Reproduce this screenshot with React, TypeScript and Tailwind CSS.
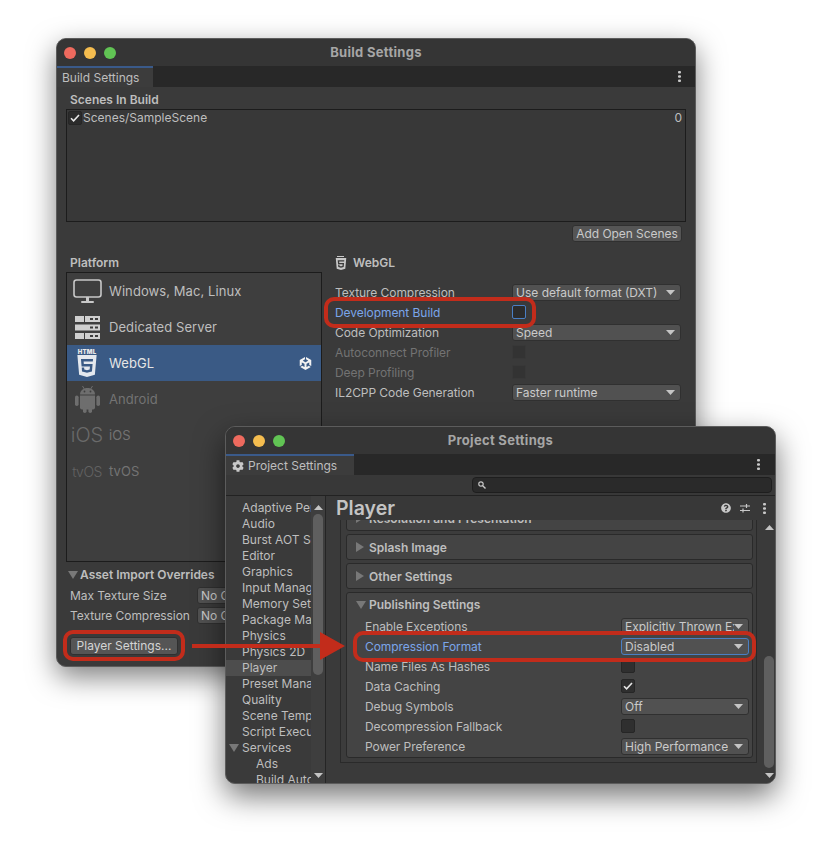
import React from "react";
import { FaCog, FaQuestionCircle } from "react-icons/fa";
import { SiHtml5, SiUnity } from "react-icons/si";

const Caret = ({ className = "" }: { className?: string }) => (
  <svg width="9" height="5" viewBox="0 0 9 5" className={className}>
    <path d="M0 0h9L4.5 5z" fill="#c4c4c4" />
  </svg>
);

const FoldDown = () => (
  <svg width="10" height="8" viewBox="0 0 10 8" className="shrink-0">
    <path d="M0 0h10L5 8z" fill="#787878" />
  </svg>
);

const Dots = () => (
  <svg width="3" height="11" viewBox="0 0 3 11">
    <rect x="0" y="0" width="3" height="2.4" rx="1" fill="#c8c8c8" />
    <rect x="0" y="4.3" width="3" height="2.4" rx="1" fill="#c8c8c8" />
    <rect x="0" y="8.6" width="3" height="2.4" rx="1" fill="#c8c8c8" />
  </svg>
);

const Check = () => (
  <svg width="10" height="8" viewBox="0 0 10 8">
    <path d="M1 4.2 3.6 6.8 9 1" fill="none" stroke="#e6e6e6" strokeWidth="1.6" />
  </svg>
);

const TrafficLights = () => (
  <div className="flex gap-2">
    <div className="w-3 h-3 rounded-full bg-[#ee6a5e]" />
    <div className="w-3 h-3 rounded-full bg-[#f5bd4f]" />
    <div className="w-3 h-3 rounded-full bg-[#61c454]" />
  </div>
);

const Dropdown = ({ label, className = "", active = false }: { label: string; className?: string; active?: boolean }) => (
  <div
    className={`h-[17px] flex items-center justify-between pl-[3px] pr-[5px] rounded-[3px] bg-[#515151] border overflow-hidden ${
      active ? "border-[#4a7fc4]" : "border-[#303030]"
    } ${className}`}
  >
    <span className="pt-px text-[12px] leading-[14px] text-[#cacaca] whitespace-nowrap overflow-hidden">{label}</span>
    <Caret className="shrink-0" />
  </div>
);

const CheckBox = ({ checked = false, active = false, dim = false }: { checked?: boolean; active?: boolean; dim?: boolean }) => (
  <div
    className={`w-[14px] h-[14px] flex items-center justify-center rounded-[2px] border ${
      active ? "border-[#4a7fc4] bg-[#2c2c2c]" : dim ? "border-[#383838] bg-[#333333]" : "border-[#262626] bg-[#2f2f2f]"
    }`}
  >
    {checked && <Check />}
  </div>
);

const Html5Icon = ({ small = false }: { small?: boolean }) =>
  small ? (
    <div className="flex flex-col items-center w-[11px]">
      <div className="w-[7px] h-px bg-[#c8c8c8] mb-px" />
      <SiHtml5 size={12} color="#c8c8c8" />
    </div>
  ) : (
    <div className="flex flex-col items-center">
      <span className="text-[6px] leading-[6px] font-black tracking-[0.2px] text-[#e8e8e8]">HTML</span>
      <SiHtml5 size={22} color="#e4e8ee" />
    </div>
  );

const AndroidIcon = () => (
  <svg width="25" height="28" viewBox="0 0 25 28">
    <g fill="#6e6e6e">
      <path d="M5 9.500C5 5.500 8.500 3 12.500 3S20 5.500 20 9.500z" />
      <path d="M7.500 1l1.800 3M17.500 1l-1.800 3" stroke="#6e6e6e" strokeWidth="1" />
      <path d="M5 10.500h15v12a2 2 0 0 1-2 2H7a2 2 0 0 1-2-2z" />
      <rect x="0" y="10.500" width="3.600" height="10.500" rx="1.800" />
      <rect x="21.400" y="10.500" width="3.600" height="10.500" rx="1.800" />
      <rect x="8" y="22" width="3.600" height="6" rx="1.800" />
      <rect x="13.400" y="22" width="3.600" height="6" rx="1.800" />
    </g>
    <circle cx="9.500" cy="6.500" r="0.900" fill="#3e3e3e" />
    <circle cx="15.500" cy="6.500" r="0.900" fill="#3e3e3e" />
  </svg>
);

const platforms: { name: string; icon: React.ReactNode; selected?: boolean; dim?: boolean }[] = [
  {
    name: "Windows, Mac, Linux",
    icon: (
      <svg width="29" height="25" viewBox="0 0 29 25">
        <rect x="1" y="1" width="27" height="17" rx="2.5" fill="none" stroke="#c8c8c8" strokeWidth="1.6" />
        <rect x="13" y="18" width="3" height="4" fill="#c8c8c8" />
        <rect x="8" y="22" width="13" height="2" rx="1" fill="#c8c8c8" />
      </svg>
    ),
  },
  {
    name: "Dedicated Server",
    icon: (
      <svg width="25" height="23" viewBox="0 0 25 23">
        <path d="M0 0h25v6H0zM0 8.500h25v6H0zM0 17h25v6H0z" fill="#cfcfcf" />
        <path d="M15 2h3v2h-3zM20 2h3v2h-3zM15 10.500h3v2h-3zM20 10.500h3v2h-3zM15 19h3v2h-3zM20 19h3v2h-3zM9 0h1v6H9zM9 17h1v6H9z" fill="#3c3c3c" />
      </svg>
    ),
  },
  { name: "WebGL", icon: <Html5Icon />, selected: true },
  { name: "Android", icon: <AndroidIcon />, dim: true },
  { name: "iOS", icon: <span className="text-[20px] font-light text-[#6a6a6a]">iOS</span>, dim: true },
  { name: "tvOS", icon: <span className="text-[14px] font-light tracking-[-0.5px] text-[#626262]">tvOS</span>, dim: true },
];

const PlatformRow = ({ name, icon, selected, dim }: (typeof platforms)[number]) => (
  <div className={`h-9 flex items-center ${selected ? "bg-[#3a5a85]" : ""}`}>
    <div className="w-[38px] flex justify-center shrink-0 ml-px">{icon}</div>
    <span className={`ml-[3px] pt-[2px] text-[13px] tracking-[0.08px] ${selected ? "text-[#e6e6e6]" : dim ? "text-[#737373]" : "text-[#bebebe]"}`}>
      {name}
    </span>
    {selected && <SiUnity size={13} color="#f2f2f2" className="ml-auto mr-[9px]" />}
  </div>
);

const BuildRow = ({ label, tone, children }: { label: string; tone?: string; children?: React.ReactNode }) => (
  <div className="h-5 flex items-center">
    <span className={`w-[177px] shrink-0 pt-[2px] text-[12px] tracking-[-0.06px] whitespace-nowrap ${tone ?? "text-[#bebebe]"}`}>{label}</span>
    {children}
  </div>
);

const BuildWindow = () => (
  <div className="absolute left-[56px] top-[38px] w-[640px] h-[629px] flex flex-col overflow-hidden rounded-[10px] border border-[#5c5c5c] bg-[#3a3a3a] shadow-[0_10px_28px_rgba(0,0,0,0.5)]">
    <div className="relative h-[27px] shrink-0 flex items-center pl-[7px] bg-[#353535]">
      <TrafficLights />
      <span className="absolute inset-x-0 text-center text-[13px] tracking-[0.3px] font-bold text-[#a6a6a6]">Build Settings</span>
    </div>
    <div className="h-[21px] shrink-0 flex items-stretch justify-between bg-[#282828]">
      <div className="w-[96px] flex items-center pl-[5px] pt-px bg-[#3c3c3c] border-t-2 border-[#3a5a8a] text-[12px] text-[#bebebe]">Build Settings</div>
      <div className="flex items-center pr-[14px]">
        <Dots />
      </div>
    </div>

    <div className="flex-1 flex flex-col pt-[5px] pl-[9px]">
      <div className="h-4 pl-1 text-[12px] leading-4 font-semibold text-[#bebebe]">Scenes In Build</div>
      <div className="mt-px w-[620px] h-[113px] flex items-start justify-between pt-[1px] pl-[1px] pr-[3px] border border-[#1c1c1c] bg-[#383838]">
        <div className="flex items-center gap-[1px]">
          <div className="w-[14px] h-[14px] flex items-center justify-center rounded-[2px] border border-[#262626] bg-[#2b2b2b]">
            <Check />
          </div>
          <span className="text-[12px] leading-[14px] text-[#bebebe]">Scenes/SampleScene</span>
        </div>
        <span className="text-[12px] leading-[14px] text-[#bebebe]">0</span>
      </div>
      <div className="self-end mt-[3px] mr-[13px] w-[110px] h-[17px] flex items-center justify-center rounded-[3px] bg-[#555555] border border-[#303030] text-[12px] tracking-[-0.06px] text-[#cacaca]">
        Add Open Scenes
      </div>

      <div className="mt-[13px] flex">
        <div className="w-[256px] shrink-0">
          <div className="h-4 pl-1 text-[12px] leading-4 font-semibold text-[#bebebe]">Platform</div>
          <div className="mt-px h-[290px] border border-[#1c1c1c] bg-[#3e3e3e]">
            {platforms.map((p) => (
              <PlatformRow key={p.name} {...p} />
            ))}
          </div>
        </div>
        <div className="ml-[13px] w-[347px]">
          <div className="h-4 flex items-center gap-[7px] text-[12px] font-semibold text-[#bebebe]">
            <Html5Icon small />
            WebGL
          </div>
          <div className="mt-[11px]">
            <BuildRow label="Texture Compression">
              <Dropdown label="Use default format (DXT)" className="w-[169px]" />
            </BuildRow>
            <BuildRow label="Development Build" tone="text-[#7ba6ea]">
              <CheckBox active />
            </BuildRow>
            <BuildRow label="Code Optimization">
              <Dropdown label="Speed" className="w-[169px]" />
            </BuildRow>
            <BuildRow label="Autoconnect Profiler" tone="text-[#737373]">
              <CheckBox dim />
            </BuildRow>
            <BuildRow label="Deep Profiling" tone="text-[#737373]">
              <CheckBox dim />
            </BuildRow>
            <BuildRow label="IL2CPP Code Generation">
              <Dropdown label="Faster runtime" className="w-[169px]" />
            </BuildRow>
          </div>
        </div>
      </div>

      <div className="mt-[5px] h-4 flex items-center gap-[2px] pl-[2px]">
        <FoldDown />
        <span className="text-[12px] font-semibold text-[#bebebe]">Asset Import Overrides</span>
      </div>
      <div className="mt-[2px]">
        {["Max Texture Size", "Texture Compression"].map((label) => (
          <div key={label} className="h-5 flex items-center pl-[4px]">
            <span className="w-[127px] shrink-0 pt-[2px] text-[12px] tracking-[-0.06px] whitespace-nowrap text-[#bebebe]">{label}</span>
            <Dropdown label="No Override" className="w-[120px]" />
          </div>
        ))}
      </div>
      <div className="mt-[12px] ml-[4px] w-[108px] h-[18px] flex items-center justify-center rounded-[3px] bg-[#555555] border border-[#303030] text-[12px] text-[#d4d4d4]">
        Player Settings...
      </div>
    </div>
  </div>
);

const sidebar = [
  "Adaptive Performance",
  "Audio",
  "Burst AOT Settings",
  "Editor",
  "Graphics",
  "Input Manager",
  "Memory Settings",
  "Package Manager",
  "Physics",
  "Physics 2D",
  "Player",
  "Preset Manager",
  "Quality",
  "Scene Template",
  "Script Execution Order",
];

const FoldCard = ({ title, className = "" }: { title: string; className?: string }) => (
  <div className={`h-[26px] flex items-center gap-[5px] pl-[9px] rounded-[3px] border border-[#2a2a2a] bg-[#444444] ${className}`}>
    <svg width="8" height="10" viewBox="0 0 8 10">
      <path d="M0 0l8 5-8 5z" fill="#787878" />
    </svg>
    <span className="pt-px text-[12px] font-semibold text-[#bebebe] whitespace-nowrap">{title}</span>
  </div>
);

const PubRow = ({ label, tone, children }: { label: string; tone?: string; children: React.ReactNode }) => (
  <div className="h-5 flex items-center">
    <span className={`w-[256px] shrink-0 pt-[2px] text-[12px] tracking-[-0.08px] whitespace-nowrap ${tone ?? "text-[#bebebe]"}`}>{label}</span>
    {children}
  </div>
);

const ProjectWindow = () => (
  <div className="absolute left-[225px] top-[426px] w-[551px] h-[358px] flex flex-col overflow-hidden rounded-[10px] border border-[#5c5c5c] bg-[#3a3a3a] shadow-[0_12px_30px_rgba(0,0,0,0.55)]">
    <div className="relative h-[27px] shrink-0 flex items-center pl-[7px] bg-[#353535]">
      <TrafficLights />
      <span className="absolute inset-x-0 text-center text-[13px] tracking-[0.3px] font-bold text-[#a6a6a6]">Project Settings</span>
    </div>
    <div className="h-[21px] shrink-0 flex items-stretch justify-between bg-[#282828]">
      <div className="w-[128px] flex items-center gap-[4px] pl-[6px] pt-px bg-[#3c3c3c] border-t-2 border-[#3a5a8a] text-[12px] text-[#bebebe]">
        <FaCog size={12} color="#c8c8c8" />
        Project Settings
      </div>
      <div className="flex items-center pr-[15px]">
        <Dots />
      </div>
    </div>
    <div className="h-[21px] shrink-0 flex items-center justify-end pr-[3px] border-b border-[#222222] bg-[#383838]">
      <div className="w-[300px] h-[16px] flex items-center pl-[5px] rounded-[4px] border border-[#1e1e1e] bg-[#2a2a2a]">
        <svg width="8" height="8" viewBox="0 0 8 8">
          <circle cx="3" cy="3" r="2.2" fill="none" stroke="#c8c8c8" strokeWidth="1.2" />
          <path d="M4.700 4.700 7.500 7.500" stroke="#c8c8c8" strokeWidth="1.4" />
        </svg>
      </div>
    </div>

    <div className="flex-1 flex min-h-0">
      <div className="w-[100px] shrink-0 flex border-r border-[#252525]">
        <div className="w-[85px] shrink-0 pt-[4px] overflow-hidden">
          {sidebar.map((name) => (
            <div
              key={name}
              className={`h-4 pl-[16px] text-[12px] leading-4 whitespace-nowrap overflow-hidden text-[#bebebe] ${name === "Player" ? "bg-[#4d4d4d]" : ""}`}
            >
              {name}
            </div>
          ))}
          <div className="h-4 flex items-center pl-[3px] gap-[3px] text-[12px] text-[#bebebe]">
            <FoldDown />
            Services
          </div>
          <div className="h-4 pl-[30px] text-[12px] leading-4 text-[#bebebe]">Ads</div>
          <div className="h-4 pl-[30px] text-[12px] leading-4 whitespace-nowrap text-[#bebebe]">Build Automation</div>
        </div>
        <div className="flex-1 flex flex-col items-center bg-[#3e3e3e] pt-[9px] pb-[5px]">
          <Caret className="rotate-180" />
          <div className="mt-[4px] w-[10px] h-[161px] rounded-full bg-[#5f5f5f]" />
          <Caret className="mt-auto" />
        </div>
      </div>

      <div className="flex-1 flex flex-col min-w-0">
        <div className="relative z-10 h-[24px] shrink-0 flex items-center justify-between pl-[10px] pr-[9px] bg-[#383838]">
          <span className="pt-[2px] text-[19.5px] font-semibold text-[#c4c4c4]">Player</span>
          <div className="flex items-center gap-[9px]">
            <FaQuestionCircle size={10} color="#c8c8c8" />
            <svg width="10" height="10" viewBox="0 0 10 10">
              <path d="M0 3h10M0 7.500h10" stroke="#c8c8c8" strokeWidth="1" />
              <path d="M6.500 1v4M3 5.500v4" stroke="#c8c8c8" strokeWidth="1.2" />
            </svg>
            <div className="ml-[4px]">
              <Dots />
            </div>
          </div>
        </div>
        <div className="flex-1 flex min-h-0 overflow-hidden">
          <div className="w-[431px] shrink-0 pl-[14px]">
            <div className="-mt-[15px] h-[258px] pl-[5px] pr-[3px] border-x border-b border-[#2a2a2a] bg-[#3c3c3c]">
              <FoldCard title="Resolution and Presentation" />
              <FoldCard title="Splash Image" className="mt-[3px]" />
              <FoldCard title="Other Settings" className="mt-[3px]" />
              <div className="mt-[3px] h-[166px] rounded-[3px] border border-[#2a2a2a] bg-[#444444] pl-[18px]">
                <div className="h-[23px] flex items-center gap-[3px] -ml-[9px]">
                  <FoldDown />
                  <span className="pt-px text-[12px] font-semibold text-[#bebebe]">Publishing Settings</span>
                </div>
                <PubRow label="Enable Exceptions">
                  <Dropdown label="Explicitly Thrown Exceptions Only" className="w-[128px]" />
                </PubRow>
                <PubRow label="Compression Format" tone="text-[#7ba6ea]">
                  <Dropdown label="Disabled" className="w-[128px]" active />
                </PubRow>
                <PubRow label="Name Files As Hashes">
                  <CheckBox />
                </PubRow>
                <PubRow label="Data Caching">
                  <CheckBox checked />
                </PubRow>
                <PubRow label="Debug Symbols">
                  <Dropdown label="Off" className="w-[128px]" />
                </PubRow>
                <PubRow label="Decompression Fallback">
                  <CheckBox />
                </PubRow>
                <PubRow label="Power Preference">
                  <Dropdown label="High Performance" className="w-[128px]" />
                </PubRow>
              </div>
            </div>
          </div>
          <div className="flex-1 flex justify-end pr-px bg-[#3a3a3a]">
            <div className="w-[10px] flex flex-col items-center pt-[5px] pb-[5px]">
              <Caret className="rotate-180" />
              <div className="mt-auto w-[10px] h-[112px] rounded-full bg-[#5f5f5f]" />
              <Caret className="mt-[5px]" />
            </div>
          </div>
        </div>
      </div>
    </div>
  </div>
);

const App: React.FC = () => {
  return (
    <div className="relative w-[831px] h-[857px] overflow-hidden bg-white [font-family:Inter,'Noto_Sans',sans-serif]">
      <BuildWindow />
      <ProjectWindow />

      {/* red callouts drawn on top of the two windows */}
      <div className="absolute left-[324px] top-[297px] w-[212px] h-[31px] rounded-[10px] border-[4px] border-[#c22c1b]" />
      <div className="absolute left-[63px] top-[630px] w-[122px] h-[31px] rounded-[10px] border-[4px] border-[#c22c1b]" />
      <div className="absolute left-[353px] top-[631px] w-[403px] h-[31px] rounded-[10px] border-[4px] border-[#c22c1b]" />
      <svg className="absolute left-[190px] top-[630px]" width="156" height="32" viewBox="0 0 156 32">
        <path d="M2 14h128V2l25 14-25 14V18H2z" fill="#c22c1b" />
      </svg>
    </div>
  );
};

export default App;
